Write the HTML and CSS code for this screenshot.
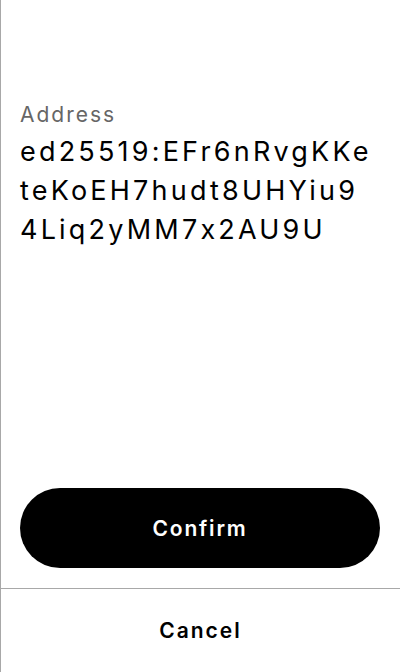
FILE: index.html
```html
<!DOCTYPE html>
<html>
<head>
<meta charset="utf-8">
<link rel="stylesheet" href="styles.css">
</head>
<body>
<div class="sheet">
  <div class="main">
    <div class="field">
      <div class="label">Address</div>
      <div class="value">ed25519:EFr6nRvgKKeteKoEH7hudt8UHYiu94Liq2yMM7x2AU9U</div>
    </div>
    <button class="confirm">Confirm</button>
  </div>
  <div class="footer">
    <button class="cancel">Cancel</button>
  </div>
</div>
</body>
</html>
```
FILE: styles.css
```css
html, body {
  margin: 0;
  padding: 0;
  background: #fff;
}
body {
  font-family: Inter, "Noto Sans", sans-serif;
  color: #000;
}
.sheet {
  height: 672px;
  border-left: 1px solid #a8a8a8;
  display: flex;
  flex-direction: column;
  box-sizing: border-box;
}
.main {
  flex: 1;
  display: flex;
  flex-direction: column;
  justify-content: space-between;
  padding: 99px 20px 20px 19px;
  border-bottom: 1px solid #a8a8a8;
}
.label {
  font-size: 21px;
  line-height: 32px;
  letter-spacing: 2px;
  color: #666;
}
.value {
  font-size: 27px;
  line-height: 39px;
  letter-spacing: 3.2px;
  word-break: break-all;
  margin-top: 1px;
  margin-right: 5px;
}
.confirm {
  height: 80px;
  width: 100%;
  border: none;
  border-radius: 40px;
  background: #000;
  color: #fff;
  font-family: Inter, "Noto Sans", sans-serif;
  font-size: 21px;
  font-weight: 600;
  letter-spacing: 1.8px;
}
.footer {
  height: 83px;
  display: flex;
  align-items: center;
  justify-content: center;
}
.cancel {
  border: none;
  background: none;
  font-family: Inter, "Noto Sans", sans-serif;
  font-size: 21px;
  font-weight: 600;
  letter-spacing: 2px;
  color: #000;
  padding: 0;
}
```
